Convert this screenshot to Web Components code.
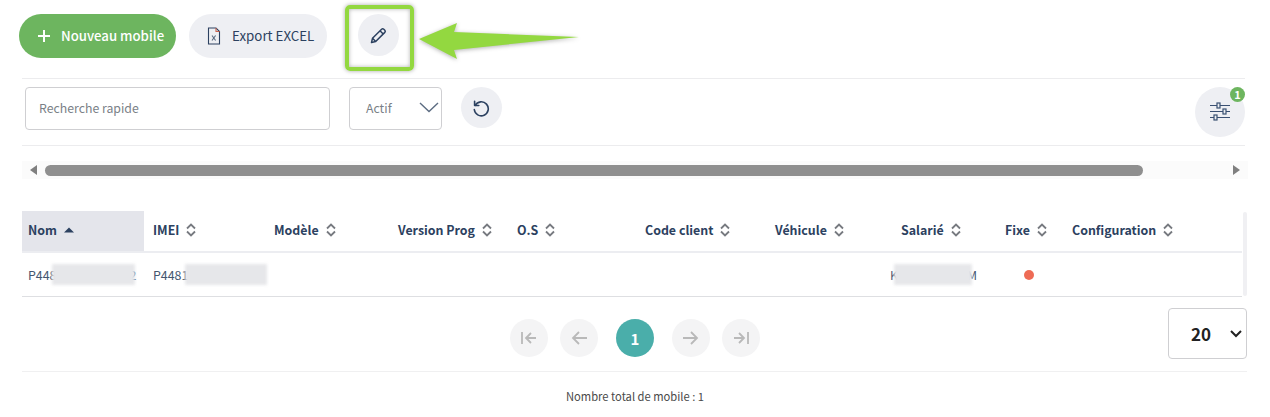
<!DOCTYPE html>
<html lang="fr">
<head>
<meta charset="utf-8">
<title>Mobiles</title>
<style>
  html, body { margin: 0; background: #fff; }
  body { font-family: "Noto Sans CJK JP", "Noto Sans", sans-serif; color: #2c4160; }
</style>
</head>
<body>
<mobile-page></mobile-page>

<script>
const ICONS = {
  plus: `<svg width="14" height="14" viewBox="0 0 14 14"><path d="M7 1v12M1 7h12" stroke="currentColor" stroke-width="2" fill="none"/></svg>`,
  excel: `<svg width="14" height="18" viewBox="0 0 14 18" fill="none"><path d="M1.5 1h7.5l3.5 3.5v12.5h-11z" stroke="#2c4160" stroke-width="1.1"/><path d="M9 1v3.5h3.5" stroke="#c9634f" stroke-width="1.1"/><path d="M5 8.5l3.6 5M8.6 8.5l-3.6 5" stroke="#5a6a80" stroke-width="1.1"/></svg>`,
  pencil: `<svg width="17" height="17" viewBox="0 0 17 17" fill="none" stroke="#2c4160" stroke-width="1.500" stroke-linejoin="round"><path d="M1.500 15.500l1-4.200L11.600 2.200a1.600 1.600 0 0 1 2.200 0l1 1a1.600 1.600 0 0 1 0 2.200L5.700 14.500z"/><path d="M10 3.800l3.200 3.200M2.500 11.300l3.200 3.200"/></svg>`,
  reset: `<svg width="18" height="18" viewBox="0 0 18 18" fill="none" stroke="#2c4160" stroke-width="1.600" stroke-linecap="round" stroke-linejoin="round" style="margin-left:-1px"><path d="M3.200 6.300A7 7 0 1 1 2.300 10.500"/><path d="M2.600 2.300v4.200h4.200"/></svg>`,
  sliders: `<svg width="22" height="20" viewBox="0 0 22 20" fill="none" stroke="#3a5072" stroke-width="1.200"><path d="M1 3.500h20M1 9.500h20M1 15.500h20"/><rect x="8" y="1" width="3" height="5" fill="#eeeff3"/><rect x="14" y="7" width="3" height="5" fill="#eeeff3"/><rect x="5" y="13" width="3" height="5" fill="#eeeff3"/></svg>`,
  first: `<svg width="18" height="16" viewBox="0 0 18 16" fill="none" stroke="#b9b9b9" stroke-width="1.800"><path d="M2 2v12M16 8H6M11 3L6 8l5 5"/></svg>`,
  prev: `<svg width="18" height="16" viewBox="0 0 18 16" fill="none" stroke="#b9b9b9" stroke-width="1.800"><path d="M17 8H3M9 2L3 8l6 6"/></svg>`,
  next: `<svg width="18" height="16" viewBox="0 0 18 16" fill="none" stroke="#b9b9b9" stroke-width="1.800"><path d="M1 8h14M9 2l6 6-6 6"/></svg>`,
  last: `<svg width="18" height="16" viewBox="0 0 18 16" fill="none" stroke="#b9b9b9" stroke-width="1.800"><path d="M16 2v12M2 8h10M7 3l5 5-5 5"/></svg>`,
  sort: `<svg width="10" height="14" viewBox="0 0 10 14" fill="none" stroke="#777a80" stroke-width="1.800"><path d="M1 5.500l4-4 4 4M1 8.500l4 4 4-4"/></svg>`,
  sorted: `<svg width="10" height="6" viewBox="0 0 10 6"><path d="M0 5.500L5 .5l5 5z" fill="#2c4160"/></svg>`,
  chevron: `<svg width="20" height="11" viewBox="0 0 20 11" fill="none" stroke="#5c6c82" stroke-width="1.400"><path d="M1 1l9 8.500L19 1"/></svg>`,
  chevronBold: `<svg width="12" height="8" viewBox="0 0 12 8" fill="none" stroke="#222" stroke-width="2"><path d="M1 1l5 5 5-5"/></svg>`,
};

class PillButton extends HTMLElement {
  constructor() {
    super();
    this._root = this.attachShadow({ mode: "open" });
  }
  connectedCallback() {
    const icon = ICONS[this.getAttribute("icon")];
    this._root.innerHTML = /*html*/ `
      <style>
        :host { display: inline-flex; align-items: center; height: 44px; border-radius: 22px; background: #eeeff3; color: #2c4160; font-size: 13.300px; line-height: 20px; box-sizing: border-box; }
        :host([variant="primary"]) { background: #6db55f; color: #fff; font-weight: 500; font-size: 13.200px; padding: 0 12px 0 18px; gap: 10px; }
        :host([variant="light"]) { padding: 0 13px 0 18px; gap: 11px; }
        span { display: flex; }
      </style>
      <span>${icon}</span><slot></slot>
    `;
  }
}

class RoundButton extends HTMLElement {
  constructor() {
    super();
    this._root = this.attachShadow({ mode: "open" });
  }
  connectedCallback() {
    this._root.innerHTML = /*html*/ `
      <style>
        :host { display: flex; align-items: center; justify-content: center; flex: none; width: var(--size, 41px); height: var(--size, 41px); border-radius: 50%; background: var(--bg, #eeeff3); color: #fff; font-size: 15px; font-weight: 700; line-height: 1; position: relative; }
      </style>
      ${ICONS[this.getAttribute("icon")] || ""}<slot></slot>
    `;
  }
}

class SelectBox extends HTMLElement {
  constructor() {
    super();
    this._root = this.attachShadow({ mode: "open" });
  }
  connectedCallback() {
    this._root.innerHTML = /*html*/ `
      <style>
        :host { display: flex; align-items: center; justify-content: space-between; box-sizing: border-box; flex: none; background: #fff; border: 1px solid #cfcfd2; border-radius: 4px; }
        :host([kind="filter"]) { width: 93px; height: 43px; padding: 0 2px 2px 16px; font-size: 12.300px; color: #7a7f87; }
        :host([kind="size"]) { width: 79px; height: 51px; padding: 0 4px 0 22px; font-size: 17px; font-weight: 700; color: #222; }
      </style>
      <slot></slot>${ICONS[this.getAttribute("kind") === "size" ? "chevronBold" : "chevron"]}
    `;
  }
}

class ActionBar extends HTMLElement {
  constructor() {
    super();
    this._root = this.attachShadow({ mode: "open" });
  }
  connectedCallback() {
    this._root.innerHTML = /*html*/ `
      <style>
        :host { display: flex; align-items: flex-start; gap: 13px; height: 64px; padding: 14px 0 0 19px; box-sizing: border-box; position: relative; }
        round-button { margin-left: 18px; height: 42px; }
        .mark { position: absolute; left: 345px; top: 5px; width: 69px; height: 66px; box-sizing: border-box; border: 4px solid #93d840; border-radius: 5px; box-shadow: 0 0 4px rgba(0,0,0,.35), inset 0 0 4px rgba(0,0,0,.3); }
        .arrow { position: absolute; left: 415px; top: 18px; filter: drop-shadow(0 1px 2px rgba(0,0,0,.3)); }
      </style>
      <pill-button variant="primary" icon="plus">Nouveau mobile</pill-button>
      <pill-button variant="light" icon="excel">Export EXCEL</pill-button>
      <round-button icon="pencil"></round-button>
      <div class="mark"></div>
      <svg class="arrow" width="170" height="44" viewBox="0 0 170 44"><path d="M4 21L42 5l-3 9 125 5-125 13 3 9z" fill="#93d840"/></svg>
    `;
  }
}

class FilterBar extends HTMLElement {
  constructor() {
    super();
    this._root = this.attachShadow({ mode: "open" });
  }
  connectedCallback() {
    this._root.innerHTML = /*html*/ `
      <style>
        :host { display: flex; align-items: flex-start; margin: 0 25px 0 22px; height: 68px; padding: 8px 0 0 3px; box-sizing: border-box; border-top: 1px solid #ececee; border-bottom: 1px solid #ececee; position: relative; }
        .search { box-sizing: border-box; width: 305px; height: 43px; border: 1px solid #cfcfd2; border-radius: 4px; padding: 0 13px 2px; display: flex; align-items: center; font-size: 12.300px; color: #7a7f87; margin-right: 19px; }
        select-box { margin-right: 19px; }
        .filters { --size: 50px; margin-left: auto; }
        .badge { position: absolute; right: 0; top: 0; width: 15px; height: 15px; border-radius: 50%; background: #6db55f; color: #fff; font-size: 11px; font-weight: 700; display: flex; align-items: center; justify-content: center; }
      </style>
      <div class="search">Recherche rapide</div>
      <select-box kind="filter">Actif</select-box>
      <round-button icon="reset"></round-button>
      <round-button class="filters" icon="sliders"><div class="badge">1</div></round-button>
    `;
  }
}

class HScrollbar extends HTMLElement {
  constructor() {
    super();
    this._root = this.attachShadow({ mode: "open" });
  }
  connectedCallback() {
    this._root.innerHTML = /*html*/ `
      <style>
        :host { display: flex; align-items: center; height: 18px; margin: 15px 22px 0 22px; padding: 0 8px; box-sizing: border-box; background: #fbfbfb; }
        i { width: 0; height: 0; border: 5px solid transparent; flex: none; }
        .l { border-right: 7px solid #7f7f7f; border-left: 0; }
        .r { border-left: 7px solid #7f7f7f; border-right: 0; margin-left: auto; }
        .thumb { height: 11px; width: 1098px; margin-left: 8px; border-radius: 6px; background: #8f8f8f; }
      </style>
      <i class="l"></i><div class="thumb"></div><i class="r"></i>
    `;
  }
}

class DataTable extends HTMLElement {
  constructor() {
    super();
    this._root = this.attachShadow({ mode: "open" });
  }
  connectedCallback() {
    const cols = ["Nom", "IMEI", "Modèle", "Version Prog", "O.S", "Code client", "Véhicule", "Salarié", "Fixe", "Configuration"];
    this._root.innerHTML = /*html*/ `
      <style>
        :host { display: block; margin: 32px 24px 0 22px; position: relative; }
        .grid { display: grid; grid-template-columns: 122px 120px 124px 119px 128px 130px 126px 104px 67px 180px; width: 1220px; }
        .th { display: flex; align-items: center; gap: 7px; padding: 0 0 3px 10px; box-sizing: border-box; font-size: 12.400px; font-weight: 700; color: #2c4160; border-bottom: 2px solid #ecedf1; height: 42px; white-space: nowrap; }
        .th:first-child { background: #e4e5eb; padding-left: 6px; }
        .th:nth-child(2) { padding-left: 9px; }
        .td { height: 43px; border-bottom: 1px solid #dedfe2; display: flex; align-items: center; padding-left: 10px; font-size: 12.400px; color: #44566f; position: relative; white-space: nowrap; }
        .td.nom { padding-left: 6px; }
        .td.imei { padding-left: 9px; }
        .blur { position: absolute; top: 11px; height: 21px; background: #e6e7ea; filter: blur(1.500px); }
        .dot { width: 10px; height: 10px; border-radius: 50%; background: #ee6b55; margin-left: 19px; }
        .vbar { position: absolute; right: -1px; top: 1px; width: 4px; height: 84px; background: #f0f0f3; border-radius: 2px; }
      </style>
      <div class="grid">
        ${cols.map((c, i) => `<div class="th">${c}${i === 0 ? ICONS.sorted : ICONS.sort}</div>`).join("")}
        <div class="td nom">P448<div class="blur" style="left:30px;width:83px"></div><span style="margin-left:73px">2</span></div>
        <div class="td imei">P4481<div class="blur" style="left:41px;width:82px"></div></div>
        <div class="td"></div><div class="td"></div><div class="td"></div><div class="td"></div><div class="td"></div>
        <div class="td" style="padding-left:0"><span style="margin-left:-1px">K</span><div class="blur" style="left:3px;width:78px"></div><span style="margin-left:69px">M</span></div>
        <div class="td"><div class="dot"></div></div>
        <div class="td"></div>
      </div>
      <div class="vbar"></div>
    `;
  }
}

class PagerBar extends HTMLElement {
  constructor() {
    super();
    this._root = this.attachShadow({ mode: "open" });
  }
  connectedCallback() {
    this._root.innerHTML = /*html*/ `
      <style>
        :host { display: flex; align-items: flex-start; height: 75px; margin: 0 23px 0 22px; box-sizing: border-box; padding-top: 11px; border-bottom: 1px solid #f0f0f1; position: relative; --size: 38px; --bg: #f4f4f5; }
        .pages { display: flex; align-items: center; gap: 12px; margin: 11px 0 0 488px; }
        .cur { --bg: #4aaeaa; margin: 0 6px; }
        select-box { position: absolute; right: 0; top: 11px; }
      </style>
      <div class="pages">
        <round-button icon="first"></round-button>
        <round-button icon="prev"></round-button>
        <round-button class="cur">1</round-button>
        <round-button icon="next"></round-button>
        <round-button icon="last"></round-button>
      </div>
      <select-box kind="size">20</select-box>
    `;
  }
}

class MobilePage extends HTMLElement {
  constructor() {
    super();
    this._root = this.attachShadow({ mode: "open" });
  }
  connectedCallback() {
    this._root.innerHTML = /*html*/ `
      <style>
        :host { display: block; width: 1270px; height: 417px; overflow: hidden; position: relative; }
        footer { text-align: center; font-size: 11.200px; line-height: 18px; color: #4a4a4a; margin-top: 15px; }
      </style>
      <action-bar></action-bar>
      <filter-bar style="margin-top:14px"></filter-bar>
      <h-scrollbar></h-scrollbar>
      <data-table></data-table>
      <pager-bar></pager-bar>
      <footer>Nombre total de mobile : 1</footer>
    `;
  }
}

window.customElements.define("pill-button", PillButton);
window.customElements.define("round-button", RoundButton);
window.customElements.define("select-box", SelectBox);
window.customElements.define("action-bar", ActionBar);
window.customElements.define("filter-bar", FilterBar);
window.customElements.define("h-scrollbar", HScrollbar);
window.customElements.define("data-table", DataTable);
window.customElements.define("pager-bar", PagerBar);
window.customElements.define("mobile-page", MobilePage);
</script>
</body>
</html>
